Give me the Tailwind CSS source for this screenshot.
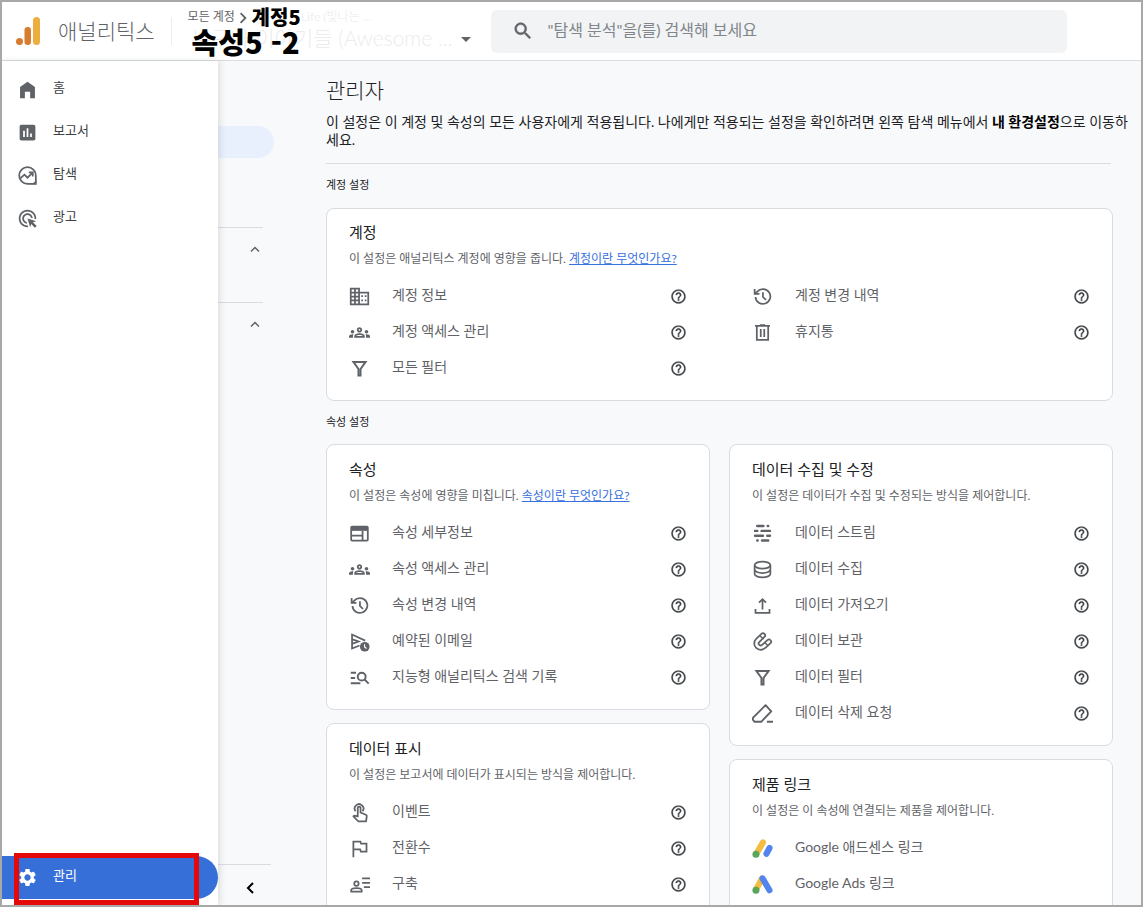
<!DOCTYPE html>
<html lang="ko">
<head>
  <meta charset="utf-8"/>
  <meta name="viewport" content="width=device-width, initial-scale=1.0"/>
  <title>애널리틱스 | 관리자</title>
  <script src="https://cdn.jsdelivr.net/npm/@tailwindcss/browser@4"></script>
</head>
<body class="font-[Lato,'Noto_Sans_CJK_KR',sans-serif] text-[#202124]">

  <!-- Icons -->
  <svg class="hidden">
    <symbol id="home" viewBox="0 0 24 24"><path fill="currentColor" d="M3.500 22V9L12 3l8.500 6v13H15v-7.500H9V22z"/></symbol>
    <symbol id="report" viewBox="0 0 24 24"><path fill="currentColor" d="M19 3H5c-1.100 0-2 .9-2 2v14c0 1.100.9 2 2 2h14c1.100 0 2-.9 2-2V5c0-1.100-.9-2-2-2zM9 17H7v-7h2v7zm4 0h-2V7h2v10zm4 0h-2v-4h2v4z"/></symbol>
    <symbol id="explore" viewBox="0 0 24 24"><g fill="none" stroke="currentColor" stroke-width="2"><path d="M12 2.500a9.500 9.500 0 1 0 0 19h9.500V12A9.500 9.500 0 0 0 12 2.500z"/><path d="M4 15l4.500-4 3.500 3.500L17.500 9M13.500 8.500h4.500V13"/></g><path fill="currentColor" d="M22 15v7h-7c3.500-.5 6.500-3.500 7-7z"/></symbol>
    <symbol id="ads" viewBox="0 0 24 24"><path fill="currentColor" d="M11.710 17.990C8.530 17.840 6 15.220 6 12c0-3.310 2.690-6 6-6 3.220 0 5.840 2.530 5.990 5.710l-2.100-.63C15.480 9.310 13.890 8 12 8c-2.210 0-4 1.790-4 4 0 1.890 1.310 3.480 3.080 3.890l.63 2.100zM22 12c0 .3-.01.6-.04.9l-1.970-.59c.01-.1.01-.21.01-.31 0-4.420-3.580-8-8-8s-8 3.580-8 8 3.580 8 8 8c.1 0 .21 0 .31-.01l.59 1.970c-.3.030-.6.040-.9.040-5.520 0-10-4.480-10-10S6.480 2 12 2s10 4.480 10 10zm-3.770 4.260L22 15l-10-3 3 10 1.260-3.770 4.270 4.270 1.980-1.980-4.280-4.260z"/></symbol>
    <symbol id="settings" viewBox="0 0 24 24"><path fill="currentColor" d="M19.140 12.940c.04-.3.06-.61.06-.94 0-.32-.02-.64-.07-.94l2.030-1.580c.18-.14.23-.41.12-.61l-1.920-3.320c-.12-.22-.37-.29-.59-.22l-2.390.96c-.5-.38-1.030-.7-1.620-.94l-.36-2.540c-.04-.24-.24-.41-.48-.41h-3.840c-.24 0-.43.17-.47.41l-.36 2.540c-.59.24-1.130.57-1.620.94l-2.390-.96c-.22-.08-.47 0-.59.22L2.740 8.870c-.12.21-.08.47.12.61l2.030 1.580c-.05.3-.09.63-.09.94s.02.64.07.94l-2.030 1.580c-.18.14-.23.41-.12.61l1.920 3.320c.12.22.37.29.59.22l2.390-.96c.5.38 1.030.7 1.620.94l.36 2.540c.05.24.24.41.48.41h3.840c.24 0 .44-.17.47-.41l.36-2.540c.59-.24 1.130-.56 1.620-.94l2.390.96c.22.08.47 0 .59-.22l1.920-3.320c.12-.22.07-.47-.12-.61l-2.010-1.580zM12 15.600c-1.980 0-3.600-1.620-3.600-3.600s1.620-3.600 3.600-3.600 3.600 1.620 3.600 3.600-1.620 3.600-3.600 3.600z"/></symbol>
    <symbol id="search" viewBox="0 0 24 24"><path fill="currentColor" stroke="currentColor" stroke-width=".5" d="M15.500 14h-.79l-.28-.27C15.410 12.590 16 11.110 16 9.500 16 5.910 13.090 3 9.500 3S3 5.910 3 9.500 5.910 16 9.500 16c1.610 0 3.090-.59 4.230-1.570l.27.28v.79l5 4.990L20.490 19l-4.990-5zm-6 0C7.010 14 5 11.990 5 9.500S7.010 5 9.500 5 14 7.010 14 9.500 11.990 14 9.500 14z"/></symbol>
    <symbol id="help" viewBox="0 0 24 24"><path fill="currentColor" stroke="currentColor" stroke-width=".3" d="M11 18h2v-2h-2v2zm1-16C6.480 2 2 6.480 2 12s4.480 10 10 10 10-4.480 10-10S17.520 2 12 2zm0 18c-4.410 0-8-3.590-8-8s3.590-8 8-8 8 3.590 8 8-3.590 8-8 8zm0-14c-2.210 0-4 1.790-4 4h2c0-1.100.9-2 2-2s2 .9 2 2c0 2-3 1.750-3 5h2c0-2.250 3-2.500 3-5 0-2.210-1.790-4-4-4z"/></symbol>
    <symbol id="domain" viewBox="0 0 24 24"><path fill="none" stroke="currentColor" stroke-width="2" d="M2 3h9.500v18H2zM11.500 7.500H22V21H11.500M6.800 3v18M2 7.500h9.500M2 12h9.500M2 16.500h9.500"/><path fill="currentColor" d="M14 10.500h2v2h-2zM18 10.500h2v2h-2zM14 15.500h2v2h-2zM18 15.500h2v2h-2z"/></symbol>
    <symbol id="groups" viewBox="0 0 24 24"><path fill="currentColor" d="M4 13c1.100 0 2-.9 2-2s-.9-2-2-2-2 .9-2 2 .9 2 2 2zm1.130 1.100c-.37-.06-.74-.1-1.130-.1-.99 0-1.930.21-2.780.58C.48 14.900 0 15.620 0 16.430V18h4.500v-1.610c0-.83.23-1.610.63-2.290zM20 13c1.100 0 2-.9 2-2s-.9-2-2-2-2 .9-2 2 .9 2 2 2zm4 3.430c0-.81-.48-1.530-1.220-1.850-.85-.37-1.790-.58-2.780-.58-.39 0-.76.04-1.130.1.4.68.63 1.460.63 2.290V18H24v-1.570zm-7.760-2.780c-1.170-.52-2.610-.9-4.240-.9-1.630 0-3.070.39-4.240.9C6.680 14.130 6 15.210 6 16.390V18h12v-1.610c0-1.180-.68-2.260-1.760-2.740zM8.070 16c.09-.23.13-.39.91-.69.97-.38 1.990-.56 3.020-.56s2.050.18 3.020.56c.77.3.81.46.91.69H8.070zM12 8c.55 0 1 .45 1 1s-.45 1-1 1-1-.45-1-1 .45-1 1-1m0-2c-1.660 0-3 1.340-3 3s1.340 3 3 3 3-1.340 3-3-1.340-3-3-3z"/></symbol>
    <symbol id="filter" viewBox="0 0 24 24"><path fill="none" stroke="currentColor" stroke-width="2.200" d="M5 4.500h14L13.200 12.500V20h-2.400v-7.500z"/></symbol>
    <symbol id="history" viewBox="0 0 24 24"><path fill="none" stroke="currentColor" stroke-width="2" d="M4 12.500a8.500 8.500 0 1 0 2-6L3.500 9M3 3.500V9h5.500M12.500 7v5.500l3.500 3.500"/></symbol>
    <symbol id="trash" viewBox="0 0 24 24"><path fill="none" stroke="currentColor" stroke-width="2" d="M3.500 4.500h17M9 3.500h6M5.500 5v15.500h13V5M10 8v9M14 8v9"/></symbol>
    <symbol id="web" viewBox="0 0 24 24"><rect x="2.500" y="4" width="19" height="16" rx="1" fill="none" stroke="currentColor" stroke-width="2"/><path fill="currentColor" d="M2.500 4h19v5h-19z"/><path fill="none" stroke="currentColor" stroke-width="2" d="M3 14.500h12M15.500 9v11"/></symbol>
    <symbol id="mail" viewBox="0 0 24 24"><path fill="none" stroke="currentColor" stroke-width="2" d="M12 16.500L3.500 20V4l15 7M4 9.500l7 2.500-7 2.500"/><circle cx="18" cy="18" r="5.500" fill="currentColor"/><path fill="none" stroke="#fff" stroke-width="1.300" d="M17.800 15v3.300l2.200 1.700"/></symbol>
    <symbol id="manage" viewBox="0 0 24 24"><g fill="none" stroke="currentColor" stroke-width="2.200"><path d="M2 6.500h6M2 12.500h5M2 18.500h11M17.500 14l5 5"/><circle cx="14.500" cy="11" r="4.500"/></g></symbol>
    <symbol id="stream" viewBox="0 0 24 24"><path fill="none" stroke="currentColor" stroke-width="2.800" stroke-linecap="round" d="M6 3.500h7M18 3.500h.5M3.500 9H6M11 9h9.500M3.500 14.500h9M17.500 14.500h3M6 20h.5M11.500 20h7"/></symbol>
    <symbol id="database" viewBox="0 0 24 24"><g fill="none" stroke="currentColor" stroke-width="2"><ellipse cx="12" cy="7" rx="9" ry="4"/><path d="M3 7v10c0 2.200 4 4 9 4s9-1.800 9-4V7M3 12c0 2.200 4 4 9 4s9-1.800 9-4"/></g></symbol>
    <symbol id="upload" viewBox="0 0 24 24"><path fill="none" stroke="currentColor" stroke-width="2" d="M12 16.500V5M8 8.700l4-3.900 4 3.900M4 16v4.500h16V16"/></symbol>
    <symbol id="magnet" viewBox="0 0 24 24"><g fill="none" stroke-linecap="round"><path stroke="currentColor" stroke-width="7" d="M12.500 5L6.500 10.800A4.800 4.800 0 0 0 13.300 17.600L19.300 12.200"/><path stroke="#fff" stroke-width="3" d="M12.500 5L6.500 10.800A4.800 4.800 0 0 0 13.300 17.600L19.300 12.200"/><path stroke="currentColor" stroke-width="1.700" d="M9.500 5.800l3 3M15 13.500l3 3"/></g></symbol>
    <symbol id="eraser" viewBox="0 0 24 24"><path fill="none" stroke="currentColor" stroke-width="2.200" stroke-linejoin="round" d="M15.500 2.500L22 9.500 10.500 21.500H3L1 19v-2zM17 21.500h7"/></symbol>
    <symbol id="touch" viewBox="0 0 24 24"><g fill="none" stroke="currentColor" stroke-width="2"><path d="M7.500 10.500a5 5 0 1 1 8 0"/><path stroke-linejoin="round" d="M10 16.500V6.800a1.500 1.500 0 0 1 3.200 0V12l6 2.500c1 .5 1.300 1 1.100 2L19.500 22h-9l-5.500-5.500 1-1z"/></g></symbol>
    <symbol id="flag" viewBox="0 0 24 24"><path fill="none" stroke="currentColor" stroke-width="2" d="M5 22V4h8l.8 2.500H20v9h-6.500l-.8-2.500H5"/></symbol>
    <symbol id="person" viewBox="0 0 24 24"><g fill="none" stroke="currentColor" stroke-width="2"><circle cx="8.500" cy="11" r="2.500"/><path d="M2.500 20v-1.500c0-3.300 12-3.300 12 0V20zM15 5h9M15 10h9M17 15h7"/></g></symbol>
    <symbol id="adsense" viewBox="0 0 24 24"><g fill="none" stroke-linecap="round" stroke-width="7"><path stroke="#f2bd42" d="M12.500 5L5 18"/><path stroke="#5383ec" d="M20 11.500L16.500 18"/></g><circle cx="4.500" cy="18.500" r="4" fill="#58a55c"/></symbol>
    <symbol id="googleads" viewBox="0 0 24 24"><g fill="none" stroke-linecap="round" stroke-width="7"><path stroke="#f2bd42" d="M11.500 5L4.500 18"/><path stroke="#5383ec" d="M12 5l8 13.500"/></g><circle cx="4.500" cy="18.500" r="4" fill="#58a55c"/></symbol>
  </svg>

  <div class="flex h-screen flex-col overflow-hidden border-2 border-[#a8a8a8] bg-[#f8f9fb]">

    <!-- Header -->
    <header class="flex h-[59px] shrink-0 items-center border-b border-[#dadce0] bg-white">
      <svg class="ml-3.5 h-7 w-6" viewBox="0 0 24 28">
        <circle cx="3.500" cy="24.500" r="3.500" fill="#d77b2f"/>
        <rect x="8.500" y="10" width="6.500" height="18" rx="3.200" fill="#d77b2f"/>
        <rect x="17" y="0" width="7" height="28" rx="3.500" fill="#ecae3e"/>
      </svg>
      <span class="ml-[18px] text-[21px] font-light text-[#5f6368]">애널리틱스</span>
      <span class="ml-4 h-7 w-px bg-[#eceded]"></span>

      <div class="relative ml-4 h-[54px] w-[283px] whitespace-nowrap">
        <div class="flex h-[26px] items-center text-xs text-[#5f6368]">
          <a href="#">모든 계정</a>
          <svg class="ml-0.5 mt-0.5 size-3" viewBox="0 0 10 10"><path fill="none" stroke="currentColor" stroke-width="1.500" d="M3 1l4 4-4 4"/></svg>
          <span class="ml-[52px] text-[#f0f0f0]">Life (빛나는 ...</span>
        </div>
        <button class="-mt-1 flex h-6 w-full items-center justify-between pl-1 text-[21px] leading-6 font-light text-[#ececec]">
          누구나 이야기들 (Awesome ...
          <svg class="mt-0.5 size-2.5" viewBox="0 0 10 10"><path fill="#5f6368" d="M0 3h10L5 8z"/></svg>
        </button>
        <!-- Account and property labels over the picker -->
        <b class="absolute left-16 top-0.5 font-['Noto_Sans_CJK_KR',sans-serif] text-[20px] leading-[22px] font-black text-black">계정5</b>
        <b class="absolute left-1 top-5 font-['Noto_Sans_CJK_KR',sans-serif] text-[29px] leading-[34px] font-black text-black">속성5 -2</b>
      </div>

      <label class="ml-5 mr-[74px] flex h-[43px] flex-1 items-center gap-3.5 rounded-md bg-[#f1f3f4] pl-[21px] text-[#5f6368]">
        <svg class="size-[22px]"><use href="#search"/></svg>
        <input type="text" aria-label="검색" class="flex-1 bg-transparent pb-0.5 text-base outline-none placeholder:text-[#80868b]" placeholder='"탐색 분석"을(를) 검색해 보세요'/>
      </label>
    </header>

    <div class="flex min-h-0 flex-1">
      <!-- Sidebar -->
      <nav class="z-10 flex w-[216px] shrink-0 flex-col bg-white pt-[7px] text-[13px] text-[#3c4043] shadow-[2px_0_6px_rgba(60,64,67,0.15)]">
        <a href="#" class="flex h-[43px] items-center gap-[15px] pl-[15px]"><svg class="size-[21px] text-[#5f6368]"><use href="#home"/></svg><span class="pb-[3px]">홈</span></a>
        <a href="#" class="flex h-[43px] items-center gap-[15px] pl-[15px]"><svg class="size-[21px] text-[#5f6368]"><use href="#report"/></svg><span class="pb-[3px]">보고서</span></a>
        <a href="#" class="flex h-[43px] items-center gap-[15px] pl-[15px]"><svg class="size-[21px] text-[#5f6368]"><use href="#explore"/></svg><span class="pb-[3px]">탐색</span></a>
        <a href="#" class="flex h-[43px] items-center gap-[15px] pl-[15px]"><svg class="size-[21px] text-[#5f6368]"><use href="#ads"/></svg><span class="pb-[3px]">광고</span></a>
        <a href="#" class="relative mt-auto mb-1.5 flex h-[43px] items-center gap-[15px] rounded-r-full bg-[#376fd9] pl-[15px] text-white">
          <svg class="size-[21px]"><use href="#settings"/></svg><span class="pb-[3px]">관리</span>
          <span class="absolute -top-[3px] left-3 h-[52px] w-[185px] border-[5px] border-[#e40808]"></span>
        </a>
      </nav>

      <!-- Edge of the admin menu -->
      <aside class="flex w-14 shrink-0 flex-col text-[#5f6368]">
        <div class="mt-[65px] h-8 rounded-r-full bg-[#e8effd]"></div>
        <button class="mt-[69px] mr-[11px] flex h-[75px] justify-end border-t border-[#dadce0] pt-4 pr-[3px]" aria-label="접기"><svg class="size-2.5" viewBox="0 0 10 10"><path fill="none" stroke="currentColor" stroke-width="1.500" d="M1 7.500l4-4 4 4"/></svg></button>
        <button class="mr-[11px] flex h-[75px] justify-end border-t border-[#dadce0] pt-4 pr-[3px]" aria-label="접기"><svg class="size-2.5" viewBox="0 0 10 10"><path fill="none" stroke="currentColor" stroke-width="1.500" d="M1 7.500l4-4 4 4"/></svg></button>
        <button class="mt-auto mr-[3px] flex h-[41px] justify-center border-t border-[#dadce0] pt-[17px] pl-2.5 text-black" aria-label="메뉴 닫기"><svg class="h-3 w-2.5" viewBox="0 0 10 12"><path fill="none" stroke="currentColor" stroke-width="2" d="M8 1L3 6l5 5"/></svg></button>
      </aside>

      <!-- Main Content -->
      <main class="min-w-0 flex-1 overflow-hidden pt-3.5 pr-7 pl-[52px]">
        <h1 class="text-[21px] leading-[30px] font-light">관리자</h1>
        <p class="mt-2 -mr-5 text-sm leading-[18px] break-all">이 설정은 이 계정 및 속성의 모든 사용자에게 적용됩니다. 나에게만 적용되는 설정을 확인하려면 왼쪽 탐색 메뉴에서 <b class="text-black">내 환경설정</b>으로 이동하세요.</p>
        <hr class="mt-3.5 mr-0.5 border-[#dadce0]"/>

        <h2 class="mt-3 text-[11px] leading-[18px]">계정 설정</h2>
        <section class="mt-3.5 rounded-lg border border-[#dadce0] bg-white px-[22px] pt-[11px] pb-3.5">
          <h3 class="text-[15px] leading-6">계정</h3>
          <p class="mt-1.5 text-xs leading-[18px] text-[#5f6368]">이 설정은 애널리틱스 계정에 영향을 줍니다. <a href="#" class="text-[#3871e0] underline">계정이란 무엇인가요?</a></p>
          <div class="mt-2.5 grid grid-cols-2 gap-x-[65px]">
            <ul data-list="account"></ul>
            <ul data-list="accountMore"></ul>
          </div>
        </section>

        <h2 class="mt-3 text-[11px] leading-[18px]">속성 설정</h2>
        <div class="mt-[13px] grid grid-cols-2 items-start gap-x-[19px]">
          <div class="flex flex-col gap-[13px]">
            <section class="rounded-lg border border-[#dadce0] bg-white px-[22px] pt-3 pb-3.5">
              <h3 class="text-[15px] leading-6">속성</h3>
              <p class="mt-1.5 text-xs leading-[18px] text-[#5f6368]">이 설정은 속성에 영향을 미칩니다. <a href="#" class="text-[#3871e0] underline">속성이란 무엇인가요?</a></p>
              <ul class="mt-2.5" data-list="property"></ul>
            </section>
            <section class="rounded-lg border border-[#dadce0] bg-white px-[22px] pt-3 pb-3.5">
              <h3 class="text-[15px] leading-6">데이터 표시</h3>
              <p class="mt-1.5 text-xs leading-[18px] text-[#5f6368]">이 설정은 보고서에 데이터가 표시되는 방식을 제어합니다.</p>
              <ul class="mt-2.5" data-list="display"></ul>
            </section>
          </div>
          <div class="flex flex-col gap-[13px]">
            <section class="rounded-lg border border-[#dadce0] bg-white px-[22px] pt-3 pb-3.5">
              <h3 class="text-[15px] leading-6">데이터 수집 및 수정</h3>
              <p class="mt-1.5 text-xs leading-[18px] text-[#5f6368]">이 설정은 데이터가 수집 및 수정되는 방식을 제어합니다.</p>
              <ul class="mt-2.5" data-list="collection"></ul>
            </section>
            <section class="rounded-lg border border-[#dadce0] bg-white px-[22px] pt-3 pb-3.5">
              <h3 class="text-[15px] leading-6">제품 링크</h3>
              <p class="mt-1.5 text-xs leading-[18px] text-[#5f6368]">이 설정은 이 속성에 연결되는 제품을 제어합니다.</p>
              <ul class="mt-2.5" data-list="links"></ul>
            </section>
          </div>
        </div>
      </main>
    </div>
  </div>

  <script>
    // [icon, label, has help button]
    const lists = {
      account: [["domain", "계정 정보", true], ["groups", "계정 액세스 관리", true], ["filter", "모든 필터", true]],
      accountMore: [["history", "계정 변경 내역", true], ["trash", "휴지통", true]],
      property: [["web", "속성 세부정보", true], ["groups", "속성 액세스 관리", true], ["history", "속성 변경 내역", true], ["mail", "예약된 이메일", true], ["manage", "지능형 애널리틱스 검색 기록", true]],
      display: [["touch", "이벤트", true], ["flag", "전환수", true], ["person", "구축", true]],
      collection: [["stream", "데이터 스트림", true], ["database", "데이터 수집", true], ["upload", "데이터 가져오기", true], ["magnet", "데이터 보관", true], ["filter", "데이터 필터", true], ["eraser", "데이터 삭제 요청", true]],
      links: [["adsense", "Google 애드센스 링크", false], ["googleads", "Google Ads 링크", false]]
    };

    document.querySelectorAll("[data-list]").forEach((ul) => {
      ul.innerHTML = lists[ul.dataset.list].map(([icon, label, help]) => `
        <li class="flex h-9 items-center justify-between text-[#5f6368]">
          <a href="#" class="flex items-center gap-[22px] text-sm"><svg class="size-[21px]"><use href="#${icon}"/></svg><span class="pb-0.5">${label}</span></a>
          ${help ? `<button class="text-[#3c4043]" aria-label="${label} 도움말"><svg class="size-[17px]"><use href="#help"/></svg></button>` : ""}
        </li>`).join("");
    });
  </script>

</body>
</html>
